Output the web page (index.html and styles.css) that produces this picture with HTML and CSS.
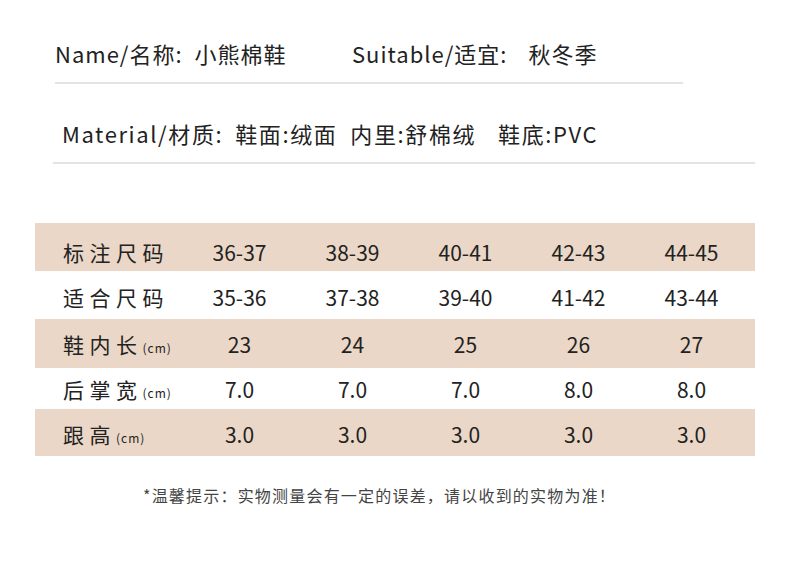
FILE: index.html
```html
<!DOCTYPE html>
<html lang="zh">
<head>
<meta charset="utf-8">
<link rel="stylesheet" href="styles.css">
</head>
<body>
<div class="page">
  <div class="info info-top">
    <span class="field field-name">Name/名称:<span class="val">小熊棉鞋</span></span>
    <span class="field">Suitable/适宜:<span class="val val-wide">秋冬季</span></span>
  </div>
  <div class="rule rule-top"></div>
  <div class="info info-mat">
    <span class="field">Material/材质:<span class="val">鞋面:绒面</span><span class="val val-mid">内里:舒棉绒</span><span class="val val-wide">鞋底:PVC</span></span>
  </div>
  <div class="rule rule-mat"></div>

  <div class="table">
    <div class="row row-a band">
      <div class="label">标注尺码</div>
      <div class="cell">36-37</div><div class="cell">38-39</div><div class="cell">40-41</div><div class="cell">42-43</div><div class="cell">44-45</div>
    </div>
    <div class="row row-b">
      <div class="label">适合尺码</div>
      <div class="cell">35-36</div><div class="cell">37-38</div><div class="cell">39-40</div><div class="cell">41-42</div><div class="cell">43-44</div>
    </div>
    <div class="row row-c band">
      <div class="label">鞋内长<span class="unit">(cm)</span></div>
      <div class="cell">23</div><div class="cell">24</div><div class="cell">25</div><div class="cell">26</div><div class="cell">27</div>
    </div>
    <div class="row row-d">
      <div class="label">后掌宽<span class="unit">(cm)</span></div>
      <div class="cell">7.0</div><div class="cell">7.0</div><div class="cell">7.0</div><div class="cell">8.0</div><div class="cell">8.0</div>
    </div>
    <div class="row row-e band">
      <div class="label">跟高<span class="unit">(cm)</span></div>
      <div class="cell">3.0</div><div class="cell">3.0</div><div class="cell">3.0</div><div class="cell">3.0</div><div class="cell">3.0</div>
    </div>
  </div>

  <p class="note">*温馨提示：实物测量会有一定的误差，请以收到的实物为准！</p>
</div>
</body>
</html>
```

FILE: styles.css
```css
html, body {
  margin: 0;
  padding: 0;
  background: #ffffff;
}
body {
  font-family: "Noto Sans CJK SC", "Noto Sans", sans-serif;
  color: #222222;
  width: 790px;
  height: 582px;
  overflow: hidden;
}
.page {
  display: flex;
  flex-direction: column;
  padding-top: 33px;
}
.info {
  display: flex;
  height: 40px;
  line-height: 40px;
  font-size: 22px;
  letter-spacing: 1px;
  white-space: nowrap;
}
.info-top {
  padding-left: 55px;
}
.field-name {
  width: 297px;
}
.info-top .val-wide {
  margin-left: 21px;
}
.info-mat {
  margin-top: 29px;
  padding-left: 62px;
  letter-spacing: 1.6px;
}
.val {
  margin-left: 12px;
}
.val-mid {
  margin-left: 13px;
}
.val-wide {
  margin-left: 22px;
}
.rule {
  height: 2px;
  background: #e3e3e3;
}
.rule-top {
  margin-top: 9px;
  margin-left: 55px;
  width: 628px;
}
.rule-mat {
  margin-top: 9px;
  margin-left: 53px;
  width: 702px;
}
.table {
  margin-top: 59px;
  margin-left: 35px;
  width: 720px;
  display: flex;
  flex-direction: column;
}
.row {
  display: flex;
  align-items: center;
  font-size: 21px;
  box-sizing: border-box;
}
.band {
  background: #ead7c7;
}
.row-a { height: 48px; padding-top: 10px; }
.row-b { height: 48px; padding-top: 4px; }
.row-c { height: 49px; padding-top: 0; }
.row-d { height: 41px; padding-top: 1px; }
.row-e { height: 47px; padding-top: 2px; }
.label {
  width: 148px;
  box-sizing: border-box;
  padding-left: 28px;
  letter-spacing: 5.5px;
  white-space: nowrap;
}
.unit {
  font-size: 12px;
  letter-spacing: 1px;
}
.cell {
  width: 113px;
  text-align: center;
}
.note {
  margin: 27px 0 0 143px;
  font-size: 16px;
  line-height: 24px;
  letter-spacing: 1.2px;
  color: #444444;
  white-space: nowrap;
}
```
